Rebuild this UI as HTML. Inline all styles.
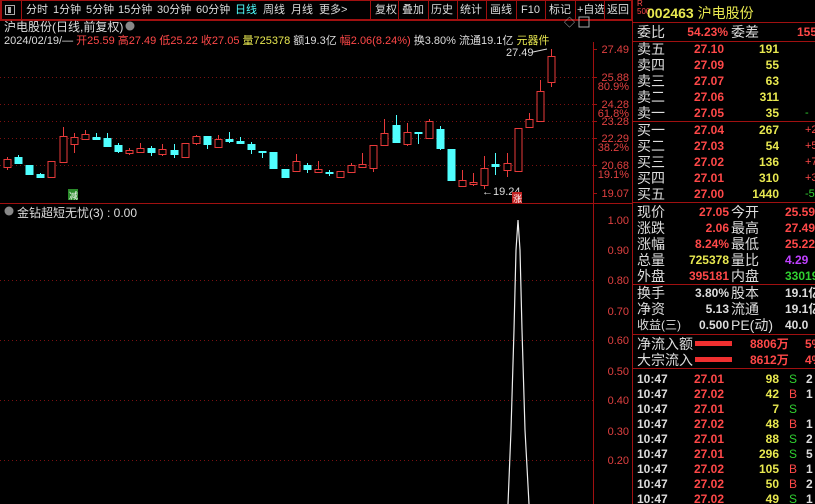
<!DOCTYPE html>
<html><head><meta charset="utf-8">
<style>
*{margin:0;padding:0;box-sizing:border-box}
body{width:815px;height:504px;background:#000;overflow:hidden;position:relative;font-family:"Liberation Sans","Noto Sans CJK SC",sans-serif;color:#ddd}
.a{position:absolute;white-space:nowrap}
.tb{position:absolute;top:0;height:20px;font-size:11px;line-height:20px;color:#ddd}
.r{color:#ff4848}.y{color:#e8e850}.g{color:#30d030}.w{color:#ddd}.c{color:#50ffff}.m{color:#c040ff}
.rp{position:absolute;left:632px;top:0;width:183px;height:504px;border-left:1px solid #a01010;overflow:hidden}
.row{position:absolute;left:0;width:200px;height:16px;font-size:14px;line-height:16px}
.row span{position:absolute;white-space:nowrap}
.n{font-size:12px;font-weight:bold}
.sep{position:absolute;left:0;width:183px;height:1px;background:#a01010}
</style></head><body>
<div class="a" style="left:0;top:0;width:632px;height:20px;border:1px solid #a01010;border-left:2px solid #a01010"></div>
<div class="a" style="left:5px;top:5px;width:10px;height:10px;border:1px solid #aaa"></div>
<div class="a" style="left:8px;top:7px;width:3px;height:6px;background:#aaa"></div>
<div class="a" style="left:21px;top:1px;width:1px;height:18px;background:#a01010"></div>
<div class="tb" style="left:26px">分时</div>
<div class="tb" style="left:53px">1分钟</div>
<div class="tb" style="left:86px">5分钟</div>
<div class="tb" style="left:118px">15分钟</div>
<div class="tb" style="left:157px">30分钟</div>
<div class="tb" style="left:196px">60分钟</div>
<div class="tb c" style="left:235px">日线</div>
<div class="tb" style="left:263px">周线</div>
<div class="tb" style="left:291px">月线</div>
<div class="tb" style="left:319px">更多&gt;</div>
<div class="tb" style="left:375px">复权</div>
<div class="tb" style="left:402px">叠加</div>
<div class="tb" style="left:431px">历史</div>
<div class="tb" style="left:460px">统计</div>
<div class="tb" style="left:490px">画线</div>
<div class="tb" style="left:521px">F10</div>
<div class="tb" style="left:549px">标记</div>
<div class="tb" style="left:577px">+自选</div>
<div class="tb" style="left:607px">返回</div>
<div class="a" style="left:370px;top:1px;width:1px;height:18px;background:#a01010"></div>
<div class="a" style="left:398px;top:1px;width:1px;height:18px;background:#a01010"></div>
<div class="a" style="left:428px;top:1px;width:1px;height:18px;background:#a01010"></div>
<div class="a" style="left:457px;top:1px;width:1px;height:18px;background:#a01010"></div>
<div class="a" style="left:486px;top:1px;width:1px;height:18px;background:#a01010"></div>
<div class="a" style="left:516px;top:1px;width:1px;height:18px;background:#a01010"></div>
<div class="a" style="left:545px;top:1px;width:1px;height:18px;background:#a01010"></div>
<div class="a" style="left:575px;top:1px;width:1px;height:18px;background:#a01010"></div>
<div class="a" style="left:604px;top:1px;width:1px;height:18px;background:#a01010"></div>

<svg class="a" style="left:0;top:0" width="632" height="504" viewBox="0 0 632 504">
<line x1="0" y1="20.5" x2="632" y2="20.5" stroke="#a01010"/>
<line x1="593.5" y1="42" x2="593.5" y2="504" stroke="#a01010"/>
<line x1="0" y1="203.5" x2="632" y2="203.5" stroke="#a01010"/>
<g stroke="#7a1010" stroke-dasharray="1,3">
<line x1="0" y1="77.5" x2="593" y2="77.5"/><line x1="0" y1="104.5" x2="593" y2="104.5"/>
<line x1="0" y1="121.5" x2="593" y2="121.5"/><line x1="0" y1="138.5" x2="593" y2="138.5"/>
<line x1="0" y1="165.5" x2="593" y2="165.5"/>
<line x1="0" y1="280.5" x2="593" y2="280.5"/><line x1="0" y1="340.5" x2="593" y2="340.5"/>
<line x1="0" y1="400.5" x2="593" y2="400.5"/><line x1="0" y1="460.5" x2="593" y2="460.5"/>
</g>
<g stroke="#a01010">
<line x1="593" y1="49.5" x2="597" y2="49.5"/><line x1="593" y1="77.5" x2="597" y2="77.5"/><line x1="593" y1="104.5" x2="597" y2="104.5"/><line x1="593" y1="121.5" x2="597" y2="121.5"/><line x1="593" y1="138.5" x2="597" y2="138.5"/><line x1="593" y1="165.5" x2="597" y2="165.5"/><line x1="593" y1="193.5" x2="597" y2="193.5"/>
</g>
<g fill="#e04040" font-size="11" font-family="Liberation Sans,sans-serif" text-anchor="end">
<text x="629" y="53">27.49</text><text x="629" y="81">25.88</text><text x="629" y="90">80.9%</text>
<text x="629" y="108">24.28</text><text x="629" y="117">61.8%</text><text x="629" y="125">23.28</text>
<text x="629" y="142">22.29</text><text x="629" y="151">38.2%</text><text x="629" y="169">20.68</text>
<text x="629" y="178">19.1%</text><text x="629" y="197">19.07</text>
<text x="629" y="224">1.00</text><text x="629" y="254">0.90</text><text x="629" y="284">0.80</text>
<text x="629" y="315">0.70</text><text x="629" y="344">0.60</text><text x="629" y="375">0.50</text>
<text x="629" y="404">0.40</text><text x="629" y="435">0.30</text><text x="629" y="464">0.20</text>
</g>
<g id="cd"></g>
<polyline points="508,504 511,430 514,330 516,250 518,220 520,250 522,330 525,430 529,504" fill="none" stroke="#eee" stroke-width="1.2"/>
<text x="506" y="56" fill="#ddd" font-size="11" font-family="Liberation Sans,sans-serif">27.49</text>
<line x1="533" y1="52" x2="547" y2="49" stroke="#ddd"/>
<text x="482" y="195" fill="#ddd" font-size="11" font-family="Liberation Sans,sans-serif">←19.24</text>
<rect x="68" y="189" width="10" height="11" fill="#2a8a2a"/>
<text x="69" y="199" fill="#fff" font-size="9" font-family="Noto Sans CJK SC,sans-serif">减</text>
<rect x="512" y="192" width="10" height="11" fill="#c02020"/>
<text x="513" y="202" fill="#fff" font-size="9" font-family="Noto Sans CJK SC,sans-serif">涨</text>
<text x="564" y="26" fill="#aaa" font-size="11">◇</text>
<rect x="579" y="17" width="10" height="10" fill="none" stroke="#aaa"/>
<circle cx="9" cy="211" r="4.5" fill="#888"/>
<circle cx="130" cy="26" r="4.5" fill="#888"/>
</svg>

<div class="a" style="left:4px;top:18px;font-size:12px;color:#ddd">沪电股份(日线,前复权)</div>
<div class="a" style="left:4px;top:32px;font-size:11px;color:#ddd">2024/02/19/— <span class="r">开25.59 高27.49 低25.22 收27.05</span> <span class="y">量725378</span> 额19.3亿 <span class="r">幅2.06(8.24%)</span> 换3.80% 流通19.1亿 <span class="y">元器件</span></div>
<div class="a" style="left:17px;top:204px;font-size:12px;color:#ddd">金钻超短无忧(3) : 0.00</div>

<div class="rp">
<div class="a r" style="left:4px;top:0;font-size:8px;line-height:8px">R<br>500</div>
<div class="a y" style="left:14px;top:3px;font-size:14px;font-weight:bold">002463 <span style="font-weight:normal">沪电股份</span></div>
<div class="sep" style="top:22px"></div>
<div class="row" style="top:24px"><span style="left:4px">委比</span><span class="r n" style="right:105px">54.23%</span><span style="left:98px">委差</span><span class="r n" style="left:164px">1552</span></div>
<div class="sep" style="top:41px"></div>
<div id="ob"></div>
<div class="sep" style="top:121px"></div>
<div class="sep" style="top:202px"></div>
<div id="st"></div>
<div class="sep" style="top:284px"></div>
<div class="sep" style="top:334px"></div>
<div class="row" style="top:336px"><span style="left:4px">净流入额</span><span style="left:62px;top:5px;width:37px;height:5px;background:#f03030"></span><span class="r n" style="left:117px">8806万</span><span class="r n" style="left:172px">5%</span></div>
<div class="row" style="top:352px"><span style="left:4px">大宗流入</span><span style="left:62px;top:5px;width:37px;height:5px;background:#f03030"></span><span class="r n" style="left:117px">8612万</span><span class="r n" style="left:172px">4%</span></div>
<div class="sep" style="top:368px"></div>
<div id="tr"></div>
</div>

<script>
var D=[["R",159,167,157,170],["C",157,163,155,164],["C",165,174,165,174],["C",174,177,173,178],["R",161,177,161,177],["R",136,162,127,162],["R",137,144,133,153],["R",134,139,130,139],["C",137,139,133,139],["C",138,146,133,147],["C",145,151,143,153],["R",150,153,148,155],["R",148,152,143,153],["C",148,152,146,156],["R",149,154,144,156],["C",150,154,144,158],["R",143,157,143,157],["R",136,143,135,145],["C",136,144,136,149],["R",139,147,135,147],["C",139,141,132,143],["C",141,143,137,143],["C",144,149,142,154],["C",151,152,151,158],["C",152,168,152,168],["C",169,177,169,177],["R",161,171,154,171],["C",165,169,163,173],["R",169,172,161,173],["C",172,173,170,176],["R",171,177,171,177],["R",165,172,163,173],["R",164,167,153,167],["R",145,168,145,172],["R",133,145,119,145],["C",125,142,115,143],["R",132,144,123,146],["C",132,133,132,144],["R",121,138,119,138],["C",129,148,126,150],["C",149,180,149,181],["R",180,186,170,186],["R",182,184,173,186],["R",168,185,156,189],["C",164,166,153,175],["R",163,170,153,177],["R",128,171,128,171],["R",119,127,113,128],["R",91,121,80,122],["R",56,82,49,87]];
var s="";D.forEach(function(d,i){var x=Math.round(7+11.1*i)+.5;var col=d[0]=="R"?"#e83a3a":"#50ffff";
s+='<line x1="'+x+'" y1="'+d[3]+'" x2="'+x+'" y2="'+d[4]+'" stroke="'+col+'"/>';
var h=Math.max(1,d[2]-d[1]);
if(d[0]=="R")s+='<rect x="'+(x-3.5)+'" y="'+(d[1]+.5)+'" width="7" height="'+h+'" fill="#000" stroke="'+col+'"/>';
else s+='<rect x="'+(x-4)+'" y="'+d[1]+'" width="8" height="'+(h+1)+'" fill="'+col+'"/>';});
document.getElementById("cd").innerHTML=s;
var ob=[["卖五","27.10","191",""],["卖四","27.09","55",""],["卖三","27.07","63",""],["卖二","27.06","311",""],["卖一","27.05","35","-"],["买一","27.04","267","+2"],["买二","27.03","54","+5"],["买三","27.02","136","+7"],["买四","27.01","310","+3"],["买五","27.00","1440","-5"]];
var h="";ob.forEach(function(o,i){var t=i<5?41+i*16:122+(i-5)*16;
h+='<div class="row" style="top:'+t+'px"><span style="left:4px">'+o[0]+'</span><span class="r n" style="right:109px">'+o[1]+'</span><span class="y n" style="right:54px">'+o[2]+'</span><span class="'+(o[3][0]=="-"?"g":"r")+'" style="left:172px;font-size:11px">'+o[3]+'</span></div>';});
document.getElementById("ob").innerHTML=h;
var st=[["现价","27.05","r","今开","25.59","r"],["涨跌","2.06","r","最高","27.49","r"],["涨幅","8.24%","r","最低","25.22","r"],["总量","725378","y","量比","4.29","m"],["外盘","395181","r","内盘","330197","g"],null,["换手","3.80%","w","股本","19.1亿","w"],["净资","5.13","w","流通","19.1亿","w"],["收益(三)","0.500","w","PE(动)","40.0","w"]];
h="";st.forEach(function(o,i){if(!o)return;var t=i<5?204+i*16:285+(i-6)*16;
var ls=o[0].length>3?'font-size:12px;':'';
h+='<div class="row" style="top:'+t+'px"><span style="left:4px;'+ls+'">'+o[0]+'</span><span class="'+o[2]+' n" style="right:104px">'+o[1]+'</span><span style="left:98px">'+o[3]+'</span><span class="'+o[5]+' n" style="left:152px">'+o[4]+'</span></div>';});
document.getElementById("st").innerHTML=h;
var tr=[["27.01","98","S","2"],["27.02","42","B","1"],["27.01","7","S",""],["27.02","48","B","1"],["27.01","88","S","2"],["27.01","296","S","5"],["27.02","105","B","1"],["27.02","50","B","2"],["27.02","49","S","1"]];
h="";tr.forEach(function(o,i){var t=371+i*15;
h+='<div class="row" style="top:'+t+'px;font-size:12px;font-weight:bold"><span class="w" style="left:4px">10:47</span><span class="r" style="right:109px">'+o[0]+'</span><span class="y" style="right:54px">'+o[1]+'</span><span class="'+(o[2]=="S"?"g":"r")+'" style="left:156px;font-weight:normal">'+o[2]+'</span><span class="w" style="left:173px">'+o[3]+'</span></div>';});
document.getElementById("tr").innerHTML=h;
</script>
</body></html>
